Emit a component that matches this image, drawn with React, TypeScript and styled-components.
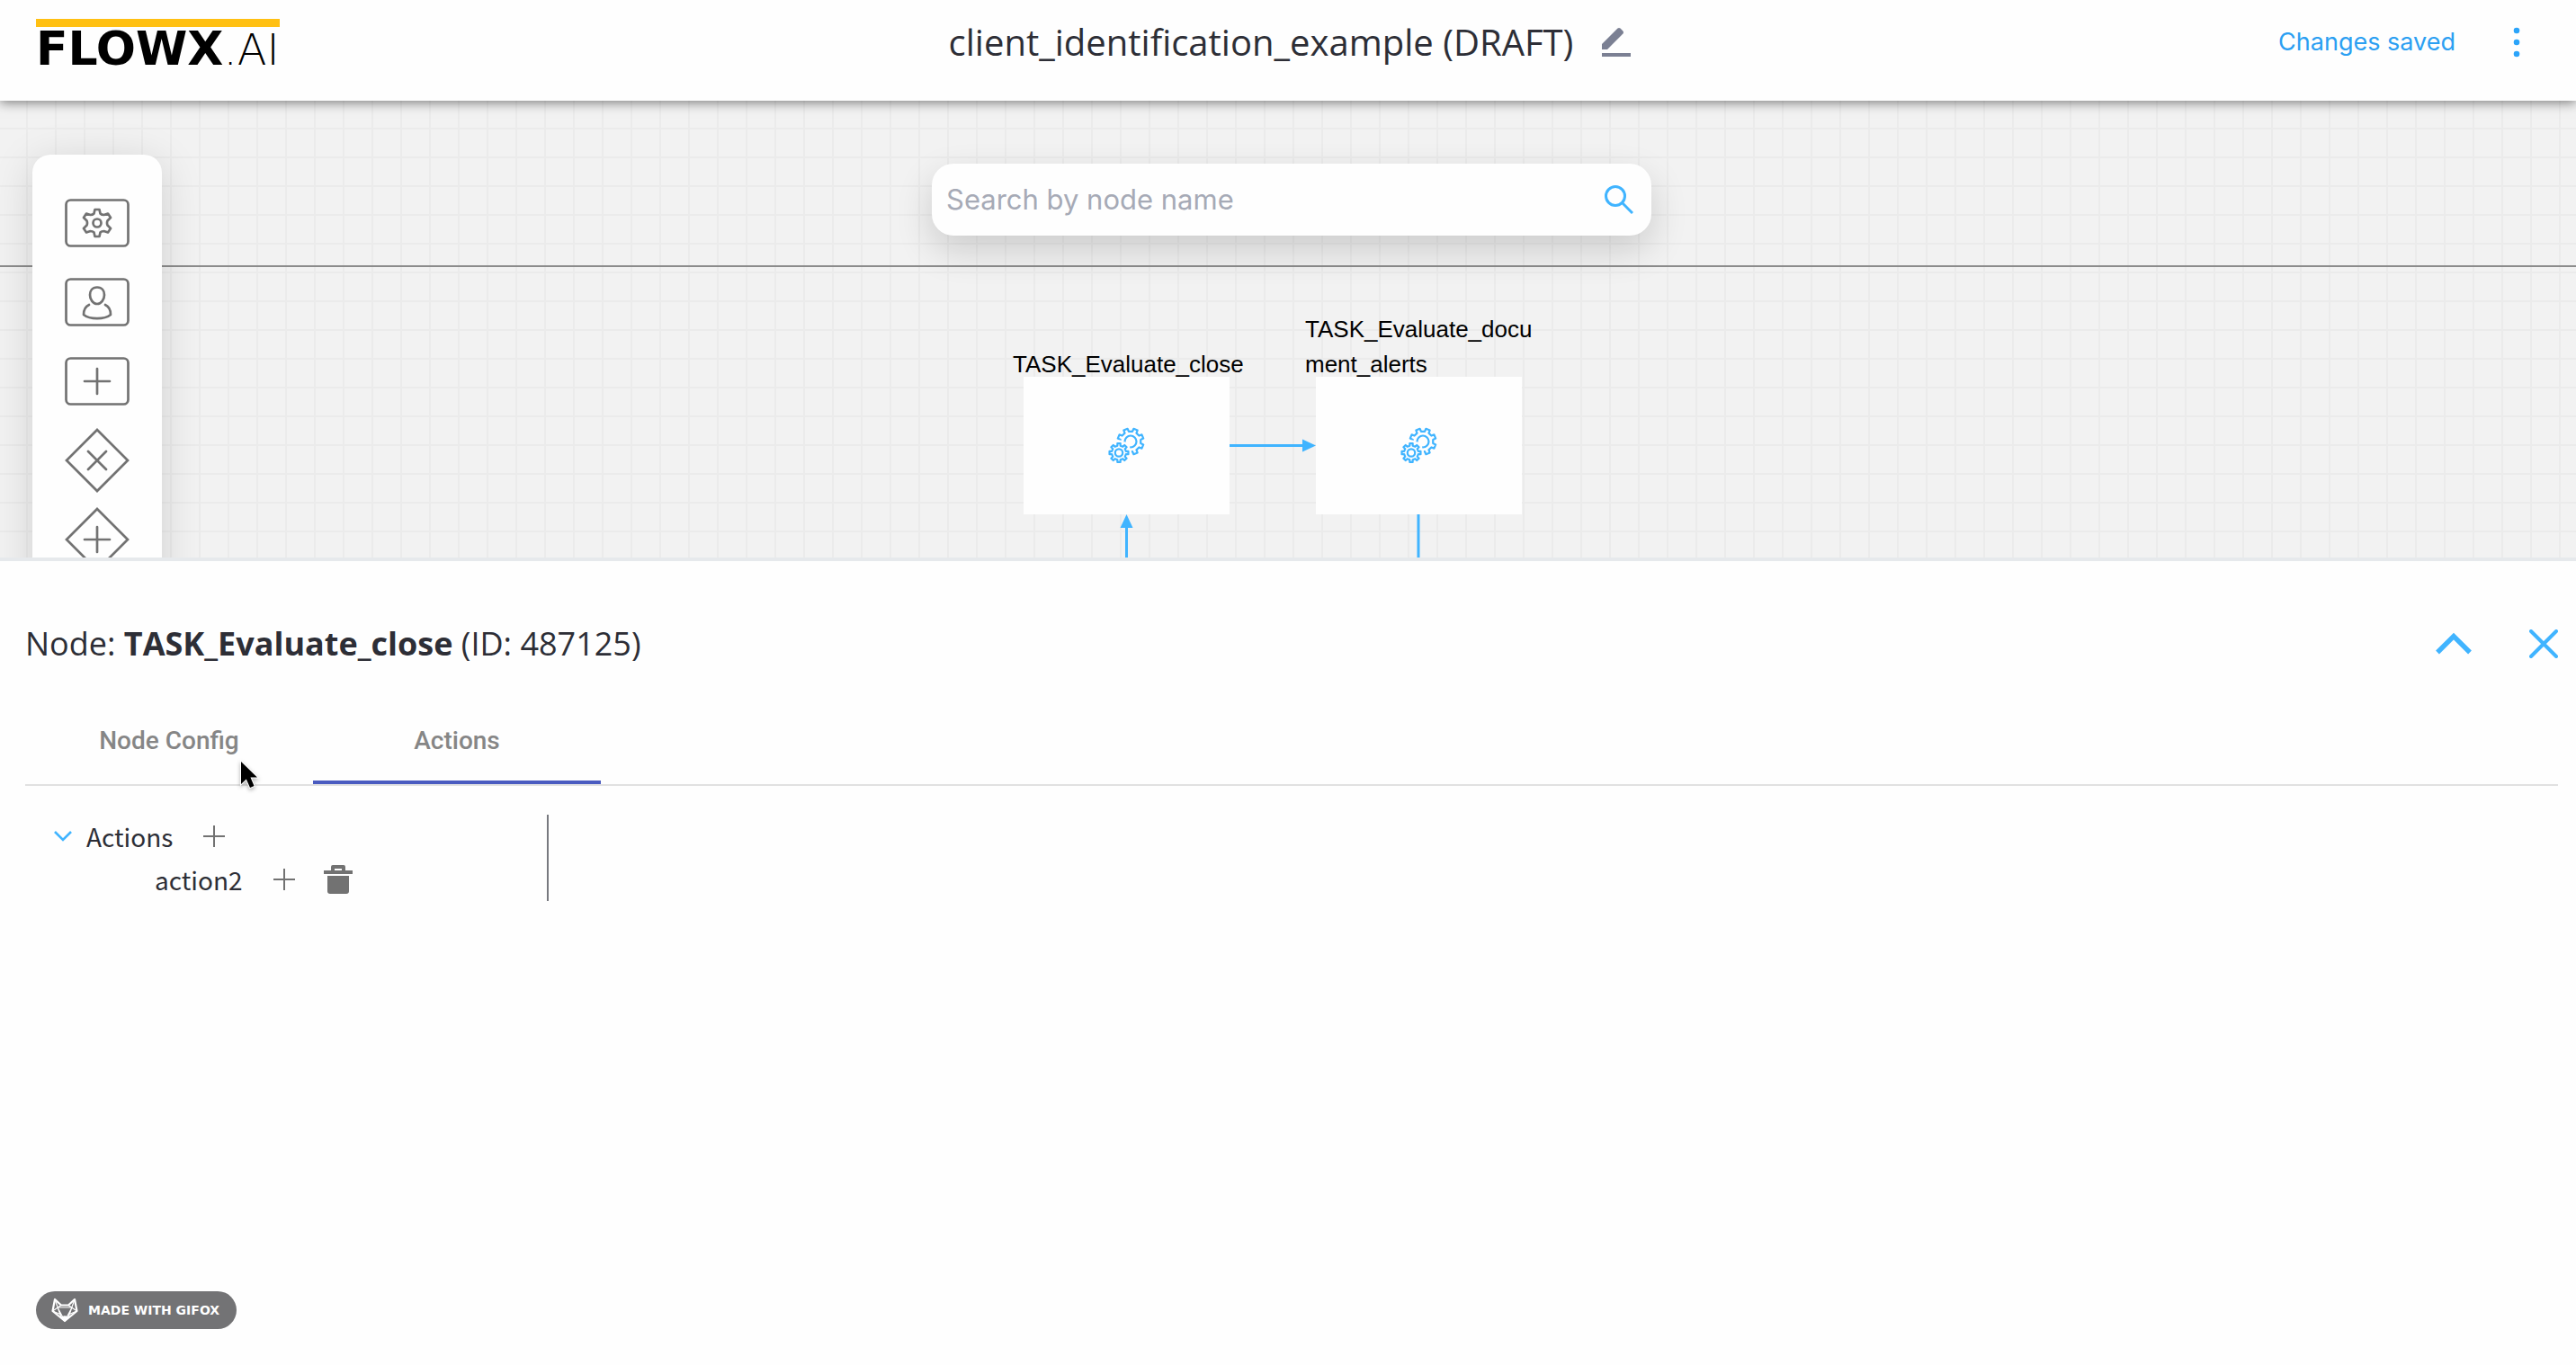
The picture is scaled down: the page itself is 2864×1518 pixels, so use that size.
import React from "react";
import styled, { createGlobalStyle } from "styled-components";

const blue = "#40b4ff";
const grey = "#727272";
const ink = "#2d2e36";

const GlobalStyle = createGlobalStyle`
  *, *::before, *::after { box-sizing: border-box; }
  body { margin: 0; background: #fefefe; color: ${ink}; }
  button { border: 0; padding: 0; background: none; font: inherit; color: inherit; cursor: pointer; }
  svg { display: block; }
  h1, h2, p, ul { margin: 0; padding: 0; }
`;

const Page = styled.div`
  display: flex;
  flex-direction: column;
  min-height: 100vh;
`;

const Header = styled.header`
  position: relative;
  z-index: 2;
  display: grid;
  grid-template-columns: 1fr auto 1fr;
  align-items: center;
  height: 112px;
  padding: 0 36px 18px 40px;
  background: #fefefe;
  box-shadow: 0 2px 12px rgba(0, 0, 0, 0.5);
`;

const Logo = styled.a`
  justify-self: start;
  margin-top: 4px;
  padding-top: 2px;
  border-top: 9px solid #ffc012;
  color: #000;
  text-decoration: none;
  font: 700 52px/44px "DejaVu Sans", sans-serif;
  white-space: nowrap;
`;

const LogoThin = styled.span`
  font: 200 48px/44px "DejaVu Sans", sans-serif;
`;

const TitleGroup = styled.div`
  display: flex;
  align-items: center;
  gap: 32px;
`;

const Title = styled.h1`
  font: 400 40px/56px "Open Sans", sans-serif;
`;

const HeaderEnd = styled.div`
  justify-self: end;
  display: flex;
  align-items: center;
  gap: 56px;
  padding-right: 18px;
  color: #2b9ff2;
  font: 400 27px/40px Inter, sans-serif;
`;

const Canvas = styled.main`
  position: relative;
  flex: 0 0 508px;
  padding: 70px 0 0 8px;
  overflow: hidden;
  background-color: #f2f2f2;
  background-image:
    linear-gradient(90deg, #ebebeb 2px, transparent 2px),
    linear-gradient(#ebebeb 2px, transparent 2px);
  background-size: 32px 32px;
  background-position: 29px 30px;
`;

const LaneLine = styled.div`
  position: absolute;
  top: 183px;
  left: 0;
  right: 0;
  height: 2px;
  background: #8c8c8c;
`;

const Toolbar = styled.aside`
  position: absolute;
  top: 60px;
  left: 36px;
  display: flex;
  flex-direction: column;
  gap: 16px;
  padding: 40px 36px;
  border-radius: 20px;
  background: #fefefe;
  box-shadow: 0 8px 48px rgba(0, 0, 0, 0.14);
`;

const SearchBox = styled.label`
  position: relative;
  display: flex;
  align-items: center;
  width: 800px;
  height: 80px;
  margin: 0 auto;
  padding: 0 20px 0 16px;
  border-radius: 24px;
  background: #fefefe;
  box-shadow: 0 16px 40px rgba(0, 0, 0, 0.16);
`;

const SearchInput = styled.input`
  flex: 1;
  min-width: 0;
  padding: 0;
  border: 0;
  outline: 0;
  background: none;
  color: ${ink};
  font: 400 31px/40px Inter, sans-serif;
  &::placeholder { color: #a6aab6; opacity: 1; }
`;

const Diagram = styled.div`
  position: absolute;
  top: 0;
  left: calc(50% - 294px);
  width: 600px;
  height: 100%;
  pointer-events: none;
`;

const Node = styled.div<{ $x: number }>`
  position: absolute;
  top: 307px;
  left: ${(p) => p.$x}px;
  display: flex;
  align-items: center;
  justify-content: center;
  width: 229px;
  height: 153px;
  background: #fefefe;
`;

const NodeLabel = styled.p`
  position: absolute;
  bottom: 100%;
  left: -12px;
  width: 260px;
  margin-bottom: -6px;
  color: #000;
  font: 400 26px/39px "Liberation Sans", Arial, sans-serif;
  word-break: break-all;
`;

const Edges = styled.svg`
  position: absolute;
  inset: 0;
`;

const Panel = styled.section`
  position: relative;
  z-index: 1;
  flex: 1;
  display: flex;
  flex-direction: column;
  padding: 48px 20px 40px 28px;
  border-top: 4px solid #e6e9ec;
  background: #fefefe;
`;

const PanelHead = styled.div`
  display: flex;
  align-items: center;
  justify-content: space-between;
  height: 88px;
`;

const PanelTitle = styled.h2`
  font: 400 36px/48px "Open Sans", sans-serif;
`;

const PanelTools = styled.div`
  display: flex;
  align-items: center;
  gap: 64px;
`;

const Tabs = styled.div`
  display: flex;
  margin-top: 16px;
  border-bottom: 2px solid #e1e1e1;
`;

const Tab = styled.button<{ $active?: boolean }>`
  width: 320px;
  height: 96px;
  border-top: 4px solid transparent;
  border-bottom: 4px solid ${(p) => (p.$active ? "#4a5bc0" : "transparent")};
  color: #868686;
  font: 500 28px/40px Roboto, sans-serif;
`;

const Tree = styled.ul`
  width: 582px;
  margin-top: 32px;
  border-right: 2px solid #77797f;
  list-style: none;
  font: 400 28px/46px "Noto Sans CJK SC", sans-serif;
`;

const TreeRow = styled.li<{ $indent: number }>`
  display: flex;
  align-items: center;
  gap: 32px;
  height: 48px;
  padding-left: ${(p) => p.$indent}px;
`;

const TreeName = styled.span`
  display: flex;
  align-items: center;
  gap: 16px;
  height: 48px;
  padding-right: 2px;
`;

const Badge = styled.a`
  display: flex;
  align-items: center;
  align-self: flex-start;
  gap: 10px;
  height: 42px;
  margin: auto 0 0 12px;
  padding: 0 19px 0 16px;
  border-radius: 21px;
  background: #737375;
  color: #fff;
  text-decoration: none;
  font: 700 14px/20px "DejaVu Sans", sans-serif;
`;

const Pointer = styled.svg`
  position: absolute;
  top: 220px;
  left: 264px;
  filter: drop-shadow(0 2px 2px rgba(0, 0, 0, 0.3));
`;

/* Outline of a cog with flat-topped teeth, centred on (cx, cy). */
function cog(cx: number, cy: number, outer: number, inner: number, teeth: number, turn: number) {
  const step = (Math.PI * 2) / teeth;
  const points: string[] = [];
  for (let i = 0; i < teeth; i++) {
    const a = i * step + turn;
    [[-0.27, inner], [-0.2, outer], [0.2, outer], [0.27, inner]].forEach(([k, r]) => {
      points.push(`${(cx + Math.cos(a + k * step) * r).toFixed(2)} ${(cy + Math.sin(a + k * step) * r).toFixed(2)}`);
    });
  }
  return `M${points.join("L")}Z`;
}

const bigCog = cog(25, 16, 14.6, 11.4, 8, Math.PI / 8);
const smallCog = cog(12, 28.5, 10.6, 8, 8, 0);
/* The palette cog has narrow teeth that flare out of a curved body. */
const toolCog =
  "M33.500 21H38.500L39.500 25.500Q41 27 43.500 27L48 25.500L51 30L47.500 33.500Q46.500 36 47.500 38.500L51 42L48 46.500L43.500 45Q41 45 39.500 46.500L38.500 51H33.500L32.500 46.500Q31 45 28.500 45L24 46.500L21 42L24.500 38.500Q25.500 36 24.500 33.500L21 30L24 25.500L28.500 27Q31 27 32.500 25.500Z";

const Cogs = () => (
  <svg width="42" height="42" viewBox="0 0 42 42" fill="none" stroke={blue} strokeWidth="2.200" strokeLinejoin="round">
    <path d={bigCog} />
    <circle cx="25" cy="16" r="6.500" />
    <path d={smallCog} fill="#fefefe" stroke="#fefefe" strokeWidth="7" />
    <path d={smallCog} />
    <circle cx="12" cy="28.500" r="4.200" />
  </svg>
);

const Plus = () => (
  <svg width="24" height="24" viewBox="0 0 24 24" stroke={grey} strokeWidth="2">
    <path d="M12 0V24M0 12H24" />
  </svg>
);

const frame = <rect x="1.500" y="10.500" width="69" height="51" rx="5" />;
const diamond = <path d="M36 2L70 36L36 70L2 36Z" strokeLinejoin="miter" />;

const tools: { name: string; art: React.ReactNode }[] = [
  { name: "Service task", art: <>{frame}<path d={toolCog} /><circle cx="36" cy="36" r="4.500" /></> },
  {
    name: "User task",
    art: (
      <>
        {frame}
        <path d="M36 19.500C30.500 19.500 28 23.500 28 28C28 33 31.500 38 36 38S44 33 44 28C44 23.500 41.500 19.500 36 19.500Z" />
        <path d="M27 39C22.500 41 21 45.500 21 50C28 55.500 44 55.500 51 50C51 45.500 49.500 41 45 39" />
      </>
    ),
  },
  { name: "Subprocess", art: <>{frame}<path d="M36 22V50M22 36H50" /></> },
  { name: "Exclusive gateway", art: <>{diamond}<path d="M26 26L46 46M46 26L26 46" /></> },
  { name: "Parallel gateway", art: <>{diamond}<path d="M36 22V50M22 36H50" /></> },
  { name: "Start event", art: <circle cx="36" cy="36" r="26" /> },
];

export default function App() {
  return (
    <Page>
      <GlobalStyle />
      <Header>
        <Logo href="#">
          FLOWX<LogoThin>.AI</LogoThin>
        </Logo>
        <TitleGroup>
          <Title>client_identification_example (DRAFT)</Title>
          <button aria-label="Rename process">
            <svg width="32" height="32" viewBox="0 0 32 32" fill="#7b8093">
              <path d="M0 24V18L17.500 0.600Q19 -0.600 20.500 0.600L23.400 3.500Q24.600 5 23.400 6.500L6 24Z" />
              <rect y="28" width="32" height="4" />
            </svg>
          </button>
        </TitleGroup>
        <HeaderEnd>
          <span>Changes saved</span>
          <button aria-label="More options">
            <svg width="24" height="34" viewBox="0 0 24 34" fill="#2ba4fa">
              <circle cx="12" cy="4" r="3.300" />
              <circle cx="12" cy="17" r="3.300" />
              <circle cx="12" cy="30" r="3.300" />
            </svg>
          </button>
        </HeaderEnd>
      </Header>

      <Canvas>
        <LaneLine />
        <Diagram>
          <Edges width="600" height="508" viewBox="0 0 600 508" fill="none" stroke={blue} strokeWidth="3">
            <path d="M229 383.500H312M114.500 508V474M439 460V508" />
            <path d="M325 383.500L310 376.500V390.500ZM114.500 460L107.500 475H121.500Z" fill={blue} stroke="none" />
          </Edges>
          <Node $x={0}>
            <NodeLabel>TASK_Evaluate_close</NodeLabel>
            <Cogs />
          </Node>
          <Node $x={325}>
            <NodeLabel>TASK_Evaluate_document_alerts</NodeLabel>
            <Cogs />
          </Node>
        </Diagram>
        <SearchBox>
          <SearchInput type="text" aria-label="Search by node name" placeholder="Search by node name" />
          <svg width="32" height="32" viewBox="0 0 32 32" fill="none" stroke={blue} strokeWidth="3">
            <circle cx="12" cy="12" r="10.500" />
            <path d="M19.500 19.500L31 31" />
          </svg>
        </SearchBox>
        <Toolbar aria-label="Node palette">
          {tools.map((tool) => (
            <button key={tool.name} aria-label={tool.name}>
              <svg width="72" height="72" viewBox="0 0 72 72" fill="none" stroke={grey} strokeWidth="2.700" strokeLinecap="round" strokeLinejoin="round">
                {tool.art}
              </svg>
            </button>
          ))}
        </Toolbar>
      </Canvas>

      <Panel>
        <PanelHead>
          <PanelTitle>
            Node: <b>TASK_Evaluate_close</b> (ID: 487125)
          </PanelTitle>
          <PanelTools>
            <button aria-label="Expand panel">
              <svg width="40" height="32" viewBox="0 0 40 32" fill="none" stroke={blue} strokeWidth="5.400">
                <path d="M2 25.500L20 7.500L38 25.500" />
              </svg>
            </button>
            <button aria-label="Close panel">
              <svg width="32" height="32" viewBox="0 0 32 32" stroke={blue} strokeWidth="4" strokeLinecap="round">
                <path d="M2 2L30 30M30 2L2 30" />
              </svg>
            </button>
          </PanelTools>
        </PanelHead>

        <Tabs role="tablist">
          <Tab role="tab" aria-selected={false}>Node Config</Tab>
          <Tab role="tab" aria-selected $active>Actions</Tab>
        </Tabs>

        <Tree>
          <TreeRow $indent={32}>
            <TreeName>
              <button aria-label="Collapse actions">
                <svg width="20" height="20" viewBox="0 0 20 20" fill="none" stroke={blue} strokeWidth="2.600">
                  <path d="M1 5L10 14L19 5" />
                </svg>
              </button>
              Actions
            </TreeName>
            <button aria-label="Add action"><Plus /></button>
          </TreeRow>
          <TreeRow $indent={144}>
            <TreeName>action2</TreeName>
            <button aria-label="Add child action"><Plus /></button>
            <button aria-label="Delete action2">
              <svg width="32" height="32" viewBox="0 0 32 32" fill={grey}>
                <path fillRule="evenodd" d="M8 6V2Q8 0 10 0H22Q24 0 24 2V6H32V10H0V6ZM12 4V6H20V4Z" />
                <path d="M4 12H28V29Q28 32 25 32H7Q4 32 4 29Z" />
              </svg>
            </button>
          </TreeRow>
        </Tree>

        <Badge href="#">
          <svg width="32" height="28" viewBox="0 0 32 28" fill="none" stroke="#fff" strokeWidth="1.600" strokeLinejoin="round">
            <path strokeWidth="2.200" d="M5 2L2.500 15L16 26L29.500 15L27 2L20 8.500H12Z" />
            <path strokeWidth="1.200" d="M5 2L12 22M27 2L20 22M2.500 15L12 8.500M29.500 15L20 8.500M8 11H24M8 11L16 26M24 11L16 26M2.500 15L12 19M29.500 15L20 19" />
            <path d="M12 22L16 26L20 22L16 21Z" fill="#fff" />
          </svg>
          MADE WITH GIFOX
        </Badge>

        <Pointer width="28" height="38" viewBox="0 0 28 38" aria-hidden="true">
          <path d="M4 3V28L9.800 22.500L14 32L18.500 30L14.500 20.500H22Z" fill="#000" stroke="#fff" strokeWidth="2" paintOrder="stroke" />
        </Pointer>
      </Panel>
    </Page>
  );
}
